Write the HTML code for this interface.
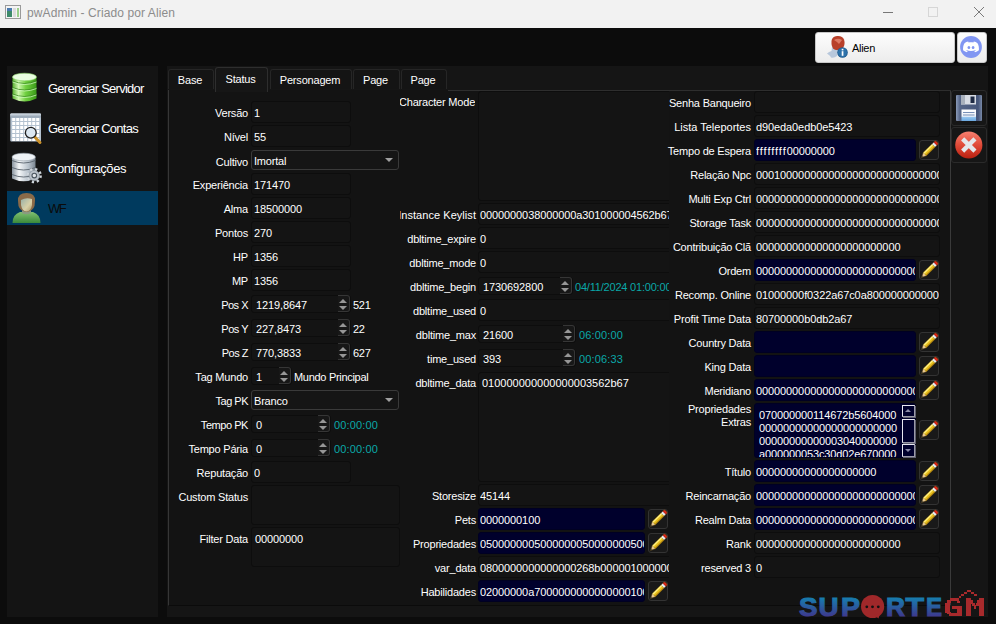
<!DOCTYPE html><html><head><meta charset="utf-8"><style>
*{margin:0;padding:0;box-sizing:border-box}
html,body{width:996px;height:624px;overflow:hidden;background:#0c0c0c;font-family:'Liberation Sans', sans-serif;font-size:11px}
.t{position:absolute;white-space:nowrap;line-height:13px}
.le{position:absolute;background:#141414;border:1px solid #0d0d0d;border-radius:3px}
.le.blue{background:#00002c;border-color:#000022}
.cb{position:absolute;background:#151515;border:1px solid #3a3a3a;border-radius:3px}
.cd{position:absolute;width:0;height:0;border-left:4px solid transparent;border-right:4px solid transparent;border-top:4px solid #a0a0a0}
.sb{position:absolute;background:#171717;border:1px solid #363636;border-left:none;border-radius:0 3px 3px 0}
.au{position:absolute;width:0;height:0;border-left:4px solid transparent;border-right:4px solid transparent;border-bottom:4px solid #969696}
.ad{position:absolute;width:0;height:0;border-left:4px solid transparent;border-right:4px solid transparent;border-top:4px solid #969696}
.pb{position:absolute;width:20px;height:20px;background:#191919;border:1px solid #333;border-radius:3px}
.pb svg{position:absolute;left:-1px;top:-1px;overflow:visible}
.abs{position:absolute}
</style></head><body>
<div class="abs" style="left:0;top:0;width:996px;height:28px;background:#f2f2f2"></div>
<svg class="abs" style="left:5px;top:5px" width="16" height="14" viewBox="0 0 16 14"><rect x="0.5" y="0.5" width="15" height="13" fill="#f4f4f4" stroke="#9a9a9a"/><rect x="2" y="3" width="5" height="9" fill="#3d8a6a"/><rect x="2" y="3" width="5" height="3" fill="#4a7ab0"/><rect x="8" y="3" width="3" height="9" fill="#dcdcdc"/><rect x="12" y="3" width="2" height="9" fill="#9ad08a"/></svg>
<div class="t" style="left:27px;top:7px;color:#8c8c8c;font-size:12px;letter-spacing:0.1px;">pwAdmin - Criado por Alien</div>
<div class="abs" style="left:883px;top:12px;width:10px;height:1px;background:#777"></div>
<div class="abs" style="left:928px;top:7px;width:10px;height:10px;border:1px solid #d6d6d6"></div>
<svg class="abs" style="left:973px;top:6px" width="12" height="12" viewBox="0 0 12 12"><path d="M1 1 L11 11 M11 1 L1 11" stroke="#7a7a7a" stroke-width="1"/></svg>
<div class="abs" style="left:815px;top:32px;width:140px;height:31px;background:linear-gradient(#fdfdfd,#ececec);border:1px solid #c8c8c8;border-radius:3px"></div>
<svg class="abs" style="left:826px;top:35px" width="24" height="24" viewBox="0 0 24 24"><path d="M1 18.5 Q3 16.5 5.5 16 L6 12 Q9 11 12 13 L11 21 Q8 23.5 5 22.5 Q4 20.5 1 18.5Z" fill="#b8c8dc"/><path d="M5.5 6 Q6 1.5 11 1 Q16.5 0.5 18 4.5 Q19.5 9 17 13 Q13 16 8.5 14.5 Q5 12.5 5.5 6Z" fill="#b8402a"/><path d="M8 5 Q12 2.5 16 5 L13 9 L11 7 Z" fill="#e0806a" opacity="0.9"/><circle cx="16.5" cy="17.5" r="5.3" fill="#1e5a8e"/><circle cx="16.5" cy="17.5" r="4.5" fill="#2e72aa"/><rect x="15.7" y="16.2" width="1.7" height="4.6" fill="#fff"/><rect x="15.7" y="13.8" width="1.7" height="1.6" fill="#fff"/></svg>
<div class="t" style="left:852px;top:42px;color:#000000;font-size:11px;letter-spacing:-0.3px;">Alien</div>
<div class="abs" style="left:957px;top:32px;width:30px;height:31px;background:linear-gradient(#fdfdfd,#ececec);border:1px solid #c8c8c8;border-radius:3px"></div>
<svg class="abs" style="left:960px;top:36px" width="22" height="22" viewBox="0 0 22 22"><circle cx="11" cy="11" r="10.9" fill="#8196f2"/><path d="M4.5 7.2 C5.6 6.3 6.9 5.8 8.2 5.6 L8.6 6.4 C10.2 6.1 11.8 6.1 13.4 6.4 L13.8 5.6 C15.1 5.8 16.4 6.3 17.5 7.2 C18.7 9.3 19.1 11.6 18.9 14.3 C17.6 15.3 16.3 15.9 15 16.3 L14.3 15.1 C14.9 14.9 15.4 14.6 15.9 14.3 L15.6 14 C12.6 15.4 9.4 15.4 6.4 14 L6.1 14.3 C6.6 14.6 7.1 14.9 7.7 15.1 L7 16.3 C5.7 15.9 4.4 15.3 3.1 14.3 C2.9 11.6 3.3 9.3 4.5 7.2Z" fill="#fff"/><ellipse cx="8.9" cy="11.4" rx="1.35" ry="1.5" fill="#8196f2"/><ellipse cx="13.1" cy="11.4" rx="1.35" ry="1.5" fill="#8196f2"/></svg>
<div class="abs" style="left:7px;top:66px;width:151px;height:551px;background:#141414"></div>
<div class="abs" style="left:7px;top:191px;width:151px;height:34px;background:#003a5e"></div>
<svg class="abs" style="left:12px;top:72px" width="25" height="32" viewBox="0 0 25 32"><defs><linearGradient id="g1" x1="0" x2="1"><stop offset="0" stop-color="#58b030"/><stop offset="0.25" stop-color="#d0f8b0"/><stop offset="0.55" stop-color="#70d040"/><stop offset="1" stop-color="#3a9a18"/></linearGradient></defs><path d="M0.5 5 Q12.5 -1 24.5 5 L24.5 26.5 Q12.5 32.5 0.5 26.5Z" fill="url(#g1)"/><ellipse cx="12.5" cy="5" rx="12" ry="3.8" fill="#e8fce0" stroke="#8ad068" stroke-width="0.6"/><path d="M0.5 9 Q12.5 14 24.5 9 M0.5 15.5 Q12.5 20.5 24.5 15.5 M0.5 22 Q12.5 27 24.5 22" stroke="#3a8a20" stroke-width="0.8" fill="none"/><path d="M0.5 10 Q12.5 15 24.5 10 M0.5 16.5 Q12.5 21.5 24.5 16.5 M0.5 23 Q12.5 28 24.5 23" stroke="#d8ffc8" stroke-width="0.7" fill="none"/></svg>
<svg class="abs" style="left:10px;top:113px" width="33" height="32" viewBox="0 0 33 32"><defs><linearGradient id="ch" x1="0" y1="0" x2="0" y2="1"><stop offset="0" stop-color="#d8e0e8"/><stop offset="1" stop-color="#8a9aaa"/></linearGradient></defs><rect x="0.3" y="0.5" width="30.7" height="28" rx="1" fill="#b4c2d0"/><rect x="0.3" y="0.5" width="30.7" height="4" rx="1" fill="url(#ch)"/><rect x="2.2" y="5" width="3" height="3" fill="#ffffff"/><rect x="6.2" y="5" width="3" height="3" fill="#ffffff"/><rect x="10.2" y="5" width="3" height="3" fill="#ffffff"/><rect x="14.2" y="5" width="3" height="3" fill="#ffffff"/><rect x="18.2" y="5" width="3" height="3" fill="#ffffff"/><rect x="22.2" y="5" width="3" height="3" fill="#ffffff"/><rect x="26.2" y="5" width="3" height="3" fill="#ffffff"/><rect x="2.2" y="9" width="3" height="3" fill="#ffffff"/><rect x="6.2" y="9" width="3" height="3" fill="#ffffff"/><rect x="10.2" y="9" width="3" height="3" fill="#ffffff"/><rect x="14.2" y="9" width="3" height="3" fill="#ffffff"/><rect x="18.2" y="9" width="3" height="3" fill="#ffffff"/><rect x="22.2" y="9" width="3" height="3" fill="#ffffff"/><rect x="26.2" y="9" width="3" height="3" fill="#ffffff"/><rect x="2.2" y="13" width="3" height="3" fill="#ffffff"/><rect x="6.2" y="13" width="3" height="3" fill="#ffffff"/><rect x="10.2" y="13" width="3" height="3" fill="#ffffff"/><rect x="14.2" y="13" width="3" height="3" fill="#ffffff"/><rect x="18.2" y="13" width="3" height="3" fill="#ffffff"/><rect x="22.2" y="13" width="3" height="3" fill="#ffffff"/><rect x="26.2" y="13" width="3" height="3" fill="#ffffff"/><rect x="2.2" y="17" width="3" height="3" fill="#ffffff"/><rect x="6.2" y="17" width="3" height="3" fill="#ffffff"/><rect x="10.2" y="17" width="3" height="3" fill="#ffffff"/><rect x="14.2" y="17" width="3" height="3" fill="#ffffff"/><rect x="18.2" y="17" width="3" height="3" fill="#ffffff"/><rect x="22.2" y="17" width="3" height="3" fill="#ffffff"/><rect x="26.2" y="17" width="3" height="3" fill="#ffffff"/><rect x="2.2" y="21" width="3" height="3" fill="#ffffff"/><rect x="6.2" y="21" width="3" height="3" fill="#ffffff"/><rect x="10.2" y="21" width="3" height="3" fill="#ffffff"/><rect x="14.2" y="21" width="3" height="3" fill="#ffffff"/><rect x="18.2" y="21" width="3" height="3" fill="#ffffff"/><rect x="22.2" y="21" width="3" height="3" fill="#ffffff"/><rect x="26.2" y="21" width="3" height="3" fill="#ffffff"/><rect x="2.2" y="25" width="3" height="3" fill="#ffffff"/><rect x="6.2" y="25" width="3" height="3" fill="#ffffff"/><rect x="10.2" y="25" width="3" height="3" fill="#ffffff"/><rect x="14.2" y="25" width="3" height="3" fill="#ffffff"/><rect x="18.2" y="25" width="3" height="3" fill="#ffffff"/><rect x="22.2" y="25" width="3" height="3" fill="#ffffff"/><rect x="26.2" y="25" width="3" height="3" fill="#ffffff"/><path d="M24.3 23.5 L30 29.5" stroke="#c8902a" stroke-width="3" stroke-linecap="round"/><circle cx="20.8" cy="19.7" r="5.4" fill="#dce8f2" stroke="#1e1e1e" stroke-width="1.3"/></svg>
<svg class="abs" style="left:11px;top:152px" width="32" height="32" viewBox="0 0 32 32"><defs><linearGradient id="g2" x1="0" x2="1"><stop offset="0" stop-color="#8a95a0"/><stop offset="0.3" stop-color="#f4f6f8"/><stop offset="0.7" stop-color="#b8c2cc"/><stop offset="1" stop-color="#7a8590"/></linearGradient></defs><path d="M1 5 Q12.5 -1 24.5 5 L24.5 26.5 Q12.5 32 1 26.5Z" fill="url(#g2)"/><ellipse cx="12.7" cy="5" rx="11.7" ry="3.8" fill="#eef2f6" stroke="#9aa4ae" stroke-width="0.6"/><path d="M1 8.5 Q12.5 13.5 24.5 8.5 M1 15.5 Q12.5 20.5 24.5 15.5 M1 22.5 Q12.5 27.5 24.5 22.5" stroke="#5a646e" stroke-width="0.9" fill="none"/><circle cx="23.3" cy="23.6" r="6.3" fill="none" stroke="#d0d6dc" stroke-width="2.6" stroke-dasharray="2.2 2.75"/><circle cx="23.3" cy="23.6" r="5.2" fill="#b8c0c8" stroke="#8a929a" stroke-width="0.6"/><circle cx="23.3" cy="23.6" r="2.3" fill="#dfe4e8" stroke="#4a545e" stroke-width="1.1"/></svg>
<svg class="abs" style="left:12px;top:192px" width="29" height="32" viewBox="0 0 29 32"><defs><linearGradient id="g3" x1="0" y1="0" x2="0" y2="1"><stop offset="0" stop-color="#80c070"/><stop offset="1" stop-color="#3a8a3a"/></linearGradient><linearGradient id="fc" x1="0" y1="0" x2="1" y2="1"><stop offset="0" stop-color="#98b0a8"/><stop offset="0.6" stop-color="#d8d0a8"/><stop offset="1" stop-color="#a89868"/></linearGradient></defs><path d="M0.5 31 Q0.5 22.5 8 20 L21 20 Q28.5 22.5 28.5 31Z" fill="url(#g3)"/><path d="M10 17 L10 21 Q14.5 23.5 19 21 L19 17Z" fill="#8a9a80"/><path d="M6 9 Q5.5 1 14.5 1 Q23.5 1 23 9 L22.5 14 Q21 19 14.5 20 Q8 19 6.5 14Z" fill="#8a6a48"/><path d="M9 8 Q14 5 20 7 L20 13 Q19 19 14.5 19.5 Q10 19 9 13Z" fill="url(#fc)"/></svg>
<div class="t" style="left:48px;top:82px;color:#ffffff;font-size:13px;letter-spacing:-0.75px;">Gerenciar Servidor</div>
<div class="t" style="left:48px;top:122px;color:#ffffff;font-size:13px;letter-spacing:-0.75px;">Gerenciar Contas</div>
<div class="t" style="left:48px;top:162px;color:#ffffff;font-size:13px;letter-spacing:-0.45px;">Configurações</div>
<div class="t" style="left:48px;top:202px;color:#0a0a0a;font-size:13px;letter-spacing:-1.6px;">WF</div>
<div class="abs" style="left:167px;top:66px;width:821px;height:551px;background:#151515"></div>
<div class="abs" style="left:168px;top:90px;width:783px;height:516px;background:#131313;border-left:1px solid #363636;border-right:1px solid #3a3a3a;border-bottom:1px solid #0b0b0b"></div>
<div class="abs" style="left:448px;top:90px;width:503px;height:1px;background:#2e2e2e"></div>
<div class="abs" style="left:168px;top:69px;width:46px;height:20px;background:#141414;border:1px solid #262626;border-bottom:none;border-radius:3px 3px 0 0"></div>
<div class="t" style="left:167px;top:74px;width:46px;text-align:center;color:#fff;letter-spacing:-0.2px">Base</div>
<div class="abs" style="left:215px;top:67px;width:53px;height:25px;background:#161616;border:1px solid #2e2e2e;border-bottom:none;border-radius:3px 3px 0 0"></div>
<div class="t" style="left:214px;top:73px;width:53px;text-align:center;color:#fff;letter-spacing:-0.2px">Status</div>
<div class="abs" style="left:270px;top:69px;width:82px;height:20px;background:#141414;border:1px solid #262626;border-bottom:none;border-radius:3px 3px 0 0"></div>
<div class="t" style="left:269px;top:74px;width:82px;text-align:center;color:#fff;letter-spacing:-0.2px">Personagem</div>
<div class="abs" style="left:353px;top:69px;width:47px;height:20px;background:#141414;border:1px solid #262626;border-bottom:none;border-radius:3px 3px 0 0"></div>
<div class="t" style="left:352px;top:74px;width:47px;text-align:center;color:#fff;letter-spacing:-0.2px">Page</div>
<div class="abs" style="left:401px;top:69px;width:46px;height:20px;background:#141414;border:1px solid #262626;border-bottom:none;border-radius:3px 3px 0 0"></div>
<div class="t" style="left:400px;top:74px;width:46px;text-align:center;color:#fff;letter-spacing:-0.2px">Page</div>
<div class="abs" style="left:951px;top:90px;width:36px;height:36px;background:#161616;border:1px solid #2a2a2a;border-radius:3px"></div>
<svg class="abs" style="left:955px;top:94px" width="28" height="28" viewBox="0 0 28 28"><defs><linearGradient id="sv" x1="0" x2="1"><stop offset="0" stop-color="#8a9ab8"/><stop offset="0.15" stop-color="#566688"/><stop offset="0.85" stop-color="#46567a"/><stop offset="1" stop-color="#7a8aa8"/></linearGradient><linearGradient id="sl" x1="0" y1="0" x2="0" y2="1"><stop offset="0" stop-color="#ffffff"/><stop offset="0.6" stop-color="#eef2f8"/><stop offset="0.64" stop-color="#9ac8f0"/><stop offset="1" stop-color="#6aa8e0"/></linearGradient></defs><rect x="1" y="1" width="26" height="26" rx="1" fill="url(#sv)"/><rect x="6" y="1" width="15" height="9.5" fill="#d8dce4"/><rect x="6" y="1" width="4" height="9.5" fill="#a8b0bc"/><rect x="15.5" y="2.5" width="4" height="6.5" fill="#1e2a44"/><rect x="6.5" y="15.5" width="14.5" height="11.5" fill="url(#sl)"/><rect x="8" y="18" width="11.5" height="1" fill="#7890b8"/><rect x="8" y="20.5" width="11.5" height="1" fill="#7890b8"/></svg>
<div class="abs" style="left:951px;top:127px;width:36px;height:36px;background:#161616;border:1px solid #2a2a2a;border-radius:3px"></div>
<svg class="abs" style="left:955px;top:131px" width="28" height="28" viewBox="0 0 28 28"><defs><linearGradient id="g4" x1="0" y1="0" x2="0" y2="1"><stop offset="0" stop-color="#f88070"/><stop offset="0.5" stop-color="#e04a38"/><stop offset="1" stop-color="#b82010"/></linearGradient></defs><circle cx="13.8" cy="14" r="13.6" fill="url(#g4)"/><path d="M9.2 9.4 L18.4 18.6 M18.4 9.4 L9.2 18.6" stroke="#e4e6ea" stroke-width="4.4" stroke-linecap="square"/></svg>
<div class="t" style="right:748px;top:107px;color:#ffffff;font-size:11px;letter-spacing:-0.2px;">Versão</div>
<div class="le" style="left:251px;top:101px;width:100px;height:22px"></div>
<div class="t" style="left:254px;top:107px;color:#ffffff;font-size:11px;letter-spacing:-0.1px;width:96px;overflow:hidden;">1</div>
<div class="t" style="right:748px;top:131px;color:#ffffff;font-size:11px;letter-spacing:-0.2px;">Nível</div>
<div class="le" style="left:251px;top:125px;width:100px;height:22px"></div>
<div class="t" style="left:254px;top:131px;color:#ffffff;font-size:11px;letter-spacing:-0.1px;width:96px;overflow:hidden;">55</div>
<div class="t" style="right:748px;top:156px;color:#ffffff;font-size:11px;letter-spacing:-0.2px;">Cultivo</div>
<div class="cb" style="left:251px;top:150px;width:148px;height:20px"></div>
<div class="t" style="left:254px;top:155px;color:#ffffff;font-size:11px;letter-spacing:-0.2px;">Imortal</div>
<div class="cd" style="left:385px;top:158px"></div>
<div class="t" style="right:748px;top:179px;color:#ffffff;font-size:11px;letter-spacing:-0.2px;">Experiência</div>
<div class="le" style="left:251px;top:173px;width:100px;height:22px"></div>
<div class="t" style="left:254px;top:179px;color:#ffffff;font-size:11px;letter-spacing:-0.1px;width:96px;overflow:hidden;">171470</div>
<div class="t" style="right:748px;top:203px;color:#ffffff;font-size:11px;letter-spacing:-0.2px;">Alma</div>
<div class="le" style="left:251px;top:197px;width:100px;height:22px"></div>
<div class="t" style="left:254px;top:203px;color:#ffffff;font-size:11px;letter-spacing:-0.1px;width:96px;overflow:hidden;">18500000</div>
<div class="t" style="right:748px;top:227px;color:#ffffff;font-size:11px;letter-spacing:-0.2px;">Pontos</div>
<div class="le" style="left:251px;top:221px;width:100px;height:22px"></div>
<div class="t" style="left:254px;top:227px;color:#ffffff;font-size:11px;letter-spacing:-0.1px;width:96px;overflow:hidden;">270</div>
<div class="t" style="right:748px;top:251px;color:#ffffff;font-size:11px;letter-spacing:-0.2px;">HP</div>
<div class="le" style="left:251px;top:245px;width:100px;height:22px"></div>
<div class="t" style="left:254px;top:251px;color:#ffffff;font-size:11px;letter-spacing:-0.1px;width:96px;overflow:hidden;">1356</div>
<div class="t" style="right:748px;top:275px;color:#ffffff;font-size:11px;letter-spacing:-0.2px;">MP</div>
<div class="le" style="left:251px;top:269px;width:100px;height:22px"></div>
<div class="t" style="left:254px;top:275px;color:#ffffff;font-size:11px;letter-spacing:-0.1px;width:96px;overflow:hidden;">1356</div>
<div class="t" style="right:748px;top:299px;color:#ffffff;font-size:11px;letter-spacing:-0.5px;">Pos X</div>
<div class="le" style="left:251px;top:295px;width:100px;height:18px"></div>
<div class="sb" style="left:338px;top:295px;width:12px;height:17px"></div>
<div class="au" style="left:339px;top:299px"></div>
<div class="ad" style="left:339px;top:306px"></div>
<div class="t" style="left:256px;top:299px;color:#ffffff;font-size:11px;letter-spacing:-0.1px;">1219,8647</div>
<div class="t" style="left:353px;top:299px;color:#ffffff;font-size:11px;letter-spacing:-0.3px;">521</div>
<div class="t" style="right:748px;top:323px;color:#ffffff;font-size:11px;letter-spacing:-0.5px;">Pos Y</div>
<div class="le" style="left:251px;top:319px;width:100px;height:18px"></div>
<div class="sb" style="left:338px;top:319px;width:12px;height:17px"></div>
<div class="au" style="left:339px;top:323px"></div>
<div class="ad" style="left:339px;top:330px"></div>
<div class="t" style="left:256px;top:323px;color:#ffffff;font-size:11px;letter-spacing:-0.1px;">227,8473</div>
<div class="t" style="left:353px;top:323px;color:#ffffff;font-size:11px;letter-spacing:-0.3px;">22</div>
<div class="t" style="right:748px;top:347px;color:#ffffff;font-size:11px;letter-spacing:-0.5px;">Pos Z</div>
<div class="le" style="left:251px;top:343px;width:100px;height:18px"></div>
<div class="sb" style="left:338px;top:343px;width:12px;height:17px"></div>
<div class="au" style="left:339px;top:347px"></div>
<div class="ad" style="left:339px;top:354px"></div>
<div class="t" style="left:256px;top:347px;color:#ffffff;font-size:11px;letter-spacing:-0.1px;">770,3833</div>
<div class="t" style="left:353px;top:347px;color:#ffffff;font-size:11px;letter-spacing:-0.3px;">627</div>
<div class="t" style="right:748px;top:371px;color:#ffffff;font-size:11px;letter-spacing:-0.2px;">Tag Mundo</div>
<div class="le" style="left:251px;top:367px;width:41px;height:18px"></div>
<div class="sb" style="left:279px;top:367px;width:12px;height:17px"></div>
<div class="au" style="left:280px;top:371px"></div>
<div class="ad" style="left:280px;top:378px"></div>
<div class="t" style="left:256px;top:371px;color:#ffffff;font-size:11px;letter-spacing:-0.1px;">1</div>
<div class="t" style="left:294px;top:371px;color:#ffffff;font-size:11px;letter-spacing:-0.3px;">Mundo Principal</div>
<div class="t" style="right:748px;top:395px;color:#ffffff;font-size:11px;letter-spacing:-0.5px;">Tag PK</div>
<div class="cb" style="left:251px;top:390px;width:148px;height:20px"></div>
<div class="t" style="left:254px;top:395px;color:#ffffff;font-size:11px;letter-spacing:-0.2px;">Branco</div>
<div class="cd" style="left:385px;top:398px"></div>
<div class="t" style="right:748px;top:419px;color:#ffffff;font-size:11px;letter-spacing:-0.45px;">Tempo PK</div>
<div class="le" style="left:251px;top:415px;width:80px;height:18px"></div>
<div class="sb" style="left:318px;top:415px;width:12px;height:17px"></div>
<div class="au" style="left:319px;top:419px"></div>
<div class="ad" style="left:319px;top:426px"></div>
<div class="t" style="left:256px;top:419px;color:#ffffff;font-size:11px;letter-spacing:-0.1px;">0</div>
<div class="t" style="left:334px;top:419px;color:#0aa8a8;font-size:11px;letter-spacing:0.15px;">00:00:00</div>
<div class="t" style="right:748px;top:443px;color:#ffffff;font-size:11px;letter-spacing:-0.2px;">Tempo Pária</div>
<div class="le" style="left:251px;top:439px;width:80px;height:18px"></div>
<div class="sb" style="left:318px;top:439px;width:12px;height:17px"></div>
<div class="au" style="left:319px;top:443px"></div>
<div class="ad" style="left:319px;top:450px"></div>
<div class="t" style="left:256px;top:443px;color:#ffffff;font-size:11px;letter-spacing:-0.1px;">0</div>
<div class="t" style="left:334px;top:443px;color:#0aa8a8;font-size:11px;letter-spacing:0.15px;">00:00:00</div>
<div class="t" style="right:748px;top:467px;color:#ffffff;font-size:11px;letter-spacing:-0.2px;">Reputação</div>
<div class="le" style="left:251px;top:461px;width:100px;height:22px"></div>
<div class="t" style="left:254px;top:467px;color:#ffffff;font-size:11px;letter-spacing:-0.1px;width:96px;overflow:hidden;">0</div>
<div class="t" style="right:748px;top:491px;color:#ffffff;font-size:11px;letter-spacing:-0.2px;">Custom Status</div>
<div class="le" style="left:251px;top:485px;width:149px;height:40px"></div>
<div class="t" style="right:748px;top:533px;color:#ffffff;font-size:11px;letter-spacing:-0.2px;">Filter Data</div>
<div class="le" style="left:251px;top:527px;width:149px;height:40px"></div>
<div class="t" style="left:255px;top:533px;color:#ffffff;font-size:11px;letter-spacing:-0.1px;">00000000</div>
<div class="abs" style="left:0;top:-1px;width:996px;height:624px">
<div class="abs" style="left:400px;top:0;width:269px;height:624px;overflow:hidden"><div class="abs" style="left:-400px;top:0;width:996px;height:624px">
<div class="t" style="left:399px;top:97px;color:#ffffff;font-size:11px;letter-spacing:-0.2px;clip-path:inset(0 0 0 0)">Character Mode</div>
<div class="le" style="left:478px;top:92px;width:200px;height:110px"></div>
<div class="t" style="right:520px;top:210px;color:#ffffff;font-size:11px;letter-spacing:0.05px;">Instance Keylist</div>
<div class="le" style="left:478px;top:204px;width:200px;height:22px"></div>
<div class="t" style="left:480px;top:210px;color:#ffffff;font-size:11px;letter-spacing:-0.1px;width:197px;overflow:hidden;">0000000038000000a301000004562b67</div>
<div class="t" style="right:520px;top:234px;color:#ffffff;font-size:11px;letter-spacing:-0.2px;">dbltime_expire</div>
<div class="le" style="left:478px;top:228px;width:200px;height:22px"></div>
<div class="t" style="left:480px;top:234px;color:#ffffff;font-size:11px;letter-spacing:-0.1px;width:197px;overflow:hidden;">0</div>
<div class="t" style="right:520px;top:258px;color:#ffffff;font-size:11px;letter-spacing:-0.2px;">dbltime_mode</div>
<div class="le" style="left:478px;top:252px;width:200px;height:22px"></div>
<div class="t" style="left:480px;top:258px;color:#ffffff;font-size:11px;letter-spacing:-0.1px;width:197px;overflow:hidden;">0</div>
<div class="t" style="right:520px;top:282px;color:#ffffff;font-size:11px;letter-spacing:-0.2px;">dbltime_begin</div>
<div class="le" style="left:478px;top:278px;width:95px;height:18px"></div>
<div class="sb" style="left:560px;top:278px;width:12px;height:17px"></div>
<div class="au" style="left:561px;top:282px"></div>
<div class="ad" style="left:561px;top:289px"></div>
<div class="t" style="left:483px;top:282px;color:#ffffff;font-size:11px;letter-spacing:-0.1px;">1730692800</div>
<div class="t" style="left:575px;top:282px;color:#0aa8a8;font-size:11px;letter-spacing:-0.2px;">04/11/2024 01:00:00</div>
<div class="t" style="right:520px;top:306px;color:#ffffff;font-size:11px;letter-spacing:-0.2px;">dbltime_used</div>
<div class="le" style="left:478px;top:300px;width:200px;height:22px"></div>
<div class="t" style="left:480px;top:306px;color:#ffffff;font-size:11px;letter-spacing:-0.1px;width:197px;overflow:hidden;">0</div>
<div class="t" style="right:520px;top:330px;color:#ffffff;font-size:11px;letter-spacing:-0.2px;">dbltime_max</div>
<div class="le" style="left:478px;top:326px;width:98px;height:18px"></div>
<div class="sb" style="left:563px;top:326px;width:12px;height:17px"></div>
<div class="au" style="left:564px;top:330px"></div>
<div class="ad" style="left:564px;top:337px"></div>
<div class="t" style="left:483px;top:330px;color:#ffffff;font-size:11px;letter-spacing:-0.1px;">21600</div>
<div class="t" style="left:579px;top:330px;color:#0aa8a8;font-size:11px;letter-spacing:0.15px;">06:00:00</div>
<div class="t" style="right:520px;top:354px;color:#ffffff;font-size:11px;letter-spacing:-0.2px;">time_used</div>
<div class="le" style="left:478px;top:350px;width:98px;height:18px"></div>
<div class="sb" style="left:563px;top:350px;width:12px;height:17px"></div>
<div class="au" style="left:564px;top:354px"></div>
<div class="ad" style="left:564px;top:361px"></div>
<div class="t" style="left:483px;top:354px;color:#ffffff;font-size:11px;letter-spacing:-0.1px;">393</div>
<div class="t" style="left:579px;top:354px;color:#0aa8a8;font-size:11px;letter-spacing:0.15px;">00:06:33</div>
<div class="t" style="right:520px;top:378px;color:#ffffff;font-size:11px;letter-spacing:-0.2px;">dbltime_data</div>
<div class="le" style="left:478px;top:373px;width:200px;height:110px"></div>
<div class="t" style="left:482px;top:378px;color:#ffffff;font-size:11px;">010000000000000003562b67</div>
<div class="t" style="right:520px;top:491px;color:#ffffff;font-size:11px;letter-spacing:-0.2px;">Storesize</div>
<div class="le" style="left:478px;top:485px;width:200px;height:22px"></div>
<div class="t" style="left:480px;top:491px;color:#ffffff;font-size:11px;letter-spacing:-0.1px;width:197px;overflow:hidden;">45144</div>
<div class="t" style="right:520px;top:515px;color:#ffffff;font-size:11px;letter-spacing:-0.2px;">Pets</div>
<div class="le blue" style="left:478px;top:509px;width:167px;height:22px"></div>
<div class="t" style="left:480px;top:515px;color:#ffffff;font-size:11px;letter-spacing:-0.1px;width:164px;overflow:hidden;">0000000100</div>
<div class="pb" style="left:648px;top:510px"><svg width="20" height="20" viewBox="0 0 20 20"><polygon points="2.83,17.18 7.39,15.81 4.22,12.62" fill="#e8c890"/><polygon points="2.40,17.60 4.31,16.97 3.04,15.69" fill="#404850"/><polygon points="7.39,15.81 16.19,7.08 13.02,3.88 4.22,12.62" fill="#e8c020"/><polygon points="5.38,13.79 14.18,5.05 13.02,3.88 4.22,12.62" fill="#fff080"/><polygon points="7.39,15.81 16.19,7.08 15.45,6.33 6.65,15.07" fill="#b88a10"/><polygon points="16.19,7.08 17.89,5.38 14.72,2.19 13.02,3.88" fill="#e8eaee"/><polygon points="17.89,5.38 19.31,3.97 18.22,1.88 16.14,0.78 14.72,2.19" fill="#d8281a"/><polygon points="2.40,17.60 7.39,15.81 19.31,3.97 18.22,1.88 16.14,0.78 4.22,12.62" fill="none" stroke="#5a4210" stroke-width="0.5"/></svg></div>
<div class="t" style="right:520px;top:539px;color:#ffffff;font-size:11px;letter-spacing:-0.2px;">Propriedades</div>
<div class="le blue" style="left:478px;top:533px;width:167px;height:22px"></div>
<div class="t" style="left:480px;top:539px;color:#ffffff;font-size:11px;letter-spacing:-0.1px;width:164px;overflow:hidden;">0500000005000000050000000500000005</div>
<div class="pb" style="left:648px;top:534px"><svg width="20" height="20" viewBox="0 0 20 20"><polygon points="2.83,17.18 7.39,15.81 4.22,12.62" fill="#e8c890"/><polygon points="2.40,17.60 4.31,16.97 3.04,15.69" fill="#404850"/><polygon points="7.39,15.81 16.19,7.08 13.02,3.88 4.22,12.62" fill="#e8c020"/><polygon points="5.38,13.79 14.18,5.05 13.02,3.88 4.22,12.62" fill="#fff080"/><polygon points="7.39,15.81 16.19,7.08 15.45,6.33 6.65,15.07" fill="#b88a10"/><polygon points="16.19,7.08 17.89,5.38 14.72,2.19 13.02,3.88" fill="#e8eaee"/><polygon points="17.89,5.38 19.31,3.97 18.22,1.88 16.14,0.78 14.72,2.19" fill="#d8281a"/><polygon points="2.40,17.60 7.39,15.81 19.31,3.97 18.22,1.88 16.14,0.78 4.22,12.62" fill="none" stroke="#5a4210" stroke-width="0.5"/></svg></div>
<div class="t" style="right:520px;top:563px;color:#ffffff;font-size:11px;letter-spacing:-0.2px;">var_data</div>
<div class="le" style="left:478px;top:557px;width:200px;height:22px"></div>
<div class="t" style="left:480px;top:563px;color:#ffffff;font-size:11px;letter-spacing:-0.1px;width:197px;overflow:hidden;">0800000000000000268b000001000000</div>
<div class="t" style="right:520px;top:587px;color:#ffffff;font-size:11px;letter-spacing:-0.2px;">Habilidades</div>
<div class="le blue" style="left:478px;top:581px;width:167px;height:22px"></div>
<div class="t" style="left:480px;top:587px;color:#ffffff;font-size:11px;letter-spacing:-0.1px;width:164px;overflow:hidden;">02000000a7000000000000000100000</div>
<div class="pb" style="left:648px;top:582px"><svg width="20" height="20" viewBox="0 0 20 20"><polygon points="2.83,17.18 7.39,15.81 4.22,12.62" fill="#e8c890"/><polygon points="2.40,17.60 4.31,16.97 3.04,15.69" fill="#404850"/><polygon points="7.39,15.81 16.19,7.08 13.02,3.88 4.22,12.62" fill="#e8c020"/><polygon points="5.38,13.79 14.18,5.05 13.02,3.88 4.22,12.62" fill="#fff080"/><polygon points="7.39,15.81 16.19,7.08 15.45,6.33 6.65,15.07" fill="#b88a10"/><polygon points="16.19,7.08 17.89,5.38 14.72,2.19 13.02,3.88" fill="#e8eaee"/><polygon points="17.89,5.38 19.31,3.97 18.22,1.88 16.14,0.78 14.72,2.19" fill="#d8281a"/><polygon points="2.40,17.60 7.39,15.81 19.31,3.97 18.22,1.88 16.14,0.78 4.22,12.62" fill="none" stroke="#5a4210" stroke-width="0.5"/></svg></div>
</div></div>
<div class="t" style="right:245px;top:98px;color:#ffffff;font-size:11px;letter-spacing:-0.2px;">Senha Banqueiro</div>
<div class="le" style="left:754px;top:92px;width:186px;height:22px"></div>
<div class="t" style="right:245px;top:122px;color:#ffffff;font-size:11px;letter-spacing:0px;">Lista Teleportes</div>
<div class="le" style="left:754px;top:116px;width:186px;height:22px"></div>
<div class="t" style="left:756px;top:122px;color:#ffffff;font-size:11px;letter-spacing:-0.1px;width:183px;overflow:hidden;">d90eda0edb0e5423</div>
<div class="t" style="right:245px;top:146px;color:#ffffff;font-size:11px;letter-spacing:-0.2px;">Tempo de Espera</div>
<div class="le blue" style="left:754px;top:140px;width:162px;height:22px"></div>
<div class="t" style="left:756px;top:146px;color:#ffffff;font-size:11px;letter-spacing:-0.1px;width:159px;overflow:hidden;"><span style="letter-spacing:0.95px">ffffffff</span>00000000</div>
<div class="pb" style="left:919px;top:141px"><svg width="20" height="20" viewBox="0 0 20 20"><polygon points="2.83,17.18 7.39,15.81 4.22,12.62" fill="#e8c890"/><polygon points="2.40,17.60 4.31,16.97 3.04,15.69" fill="#404850"/><polygon points="7.39,15.81 16.19,7.08 13.02,3.88 4.22,12.62" fill="#e8c020"/><polygon points="5.38,13.79 14.18,5.05 13.02,3.88 4.22,12.62" fill="#fff080"/><polygon points="7.39,15.81 16.19,7.08 15.45,6.33 6.65,15.07" fill="#b88a10"/><polygon points="16.19,7.08 17.89,5.38 14.72,2.19 13.02,3.88" fill="#e8eaee"/><polygon points="17.89,5.38 19.31,3.97 18.22,1.88 16.14,0.78 14.72,2.19" fill="#d8281a"/><polygon points="2.40,17.60 7.39,15.81 19.31,3.97 18.22,1.88 16.14,0.78 4.22,12.62" fill="none" stroke="#5a4210" stroke-width="0.5"/></svg></div>
<div class="t" style="right:245px;top:170px;color:#ffffff;font-size:11px;letter-spacing:-0.2px;">Relação Npc</div>
<div class="le" style="left:754px;top:164px;width:186px;height:22px"></div>
<div class="t" style="left:756px;top:170px;color:#ffffff;font-size:11px;letter-spacing:-0.1px;width:183px;overflow:hidden;">000100000000000000000000000000000000</div>
<div class="t" style="right:245px;top:194px;color:#ffffff;font-size:11px;letter-spacing:-0.2px;">Multi Exp Ctrl</div>
<div class="le" style="left:754px;top:188px;width:186px;height:22px"></div>
<div class="t" style="left:756px;top:194px;color:#ffffff;font-size:11px;letter-spacing:-0.1px;width:183px;overflow:hidden;">0000000000000000000000000000000000000000</div>
<div class="t" style="right:245px;top:218px;color:#ffffff;font-size:11px;letter-spacing:-0.2px;">Storage Task</div>
<div class="le" style="left:754px;top:212px;width:186px;height:22px"></div>
<div class="t" style="left:756px;top:218px;color:#ffffff;font-size:11px;letter-spacing:-0.1px;width:183px;overflow:hidden;">0000000000000000000000000000000000000000</div>
<div class="t" style="right:245px;top:242px;color:#ffffff;font-size:11px;letter-spacing:-0.2px;">Contribuição Clã</div>
<div class="le" style="left:754px;top:236px;width:186px;height:22px"></div>
<div class="t" style="left:756px;top:242px;color:#ffffff;font-size:11px;letter-spacing:-0.1px;width:183px;overflow:hidden;">000000000000000000000000</div>
<div class="t" style="right:245px;top:266px;color:#ffffff;font-size:11px;letter-spacing:-0.2px;">Ordem</div>
<div class="le blue" style="left:754px;top:260px;width:162px;height:22px"></div>
<div class="t" style="left:756px;top:266px;color:#ffffff;font-size:11px;letter-spacing:-0.1px;width:159px;overflow:hidden;">0000000000000000000000000000000000000000</div>
<div class="pb" style="left:919px;top:261px"><svg width="20" height="20" viewBox="0 0 20 20"><polygon points="2.83,17.18 7.39,15.81 4.22,12.62" fill="#e8c890"/><polygon points="2.40,17.60 4.31,16.97 3.04,15.69" fill="#404850"/><polygon points="7.39,15.81 16.19,7.08 13.02,3.88 4.22,12.62" fill="#e8c020"/><polygon points="5.38,13.79 14.18,5.05 13.02,3.88 4.22,12.62" fill="#fff080"/><polygon points="7.39,15.81 16.19,7.08 15.45,6.33 6.65,15.07" fill="#b88a10"/><polygon points="16.19,7.08 17.89,5.38 14.72,2.19 13.02,3.88" fill="#e8eaee"/><polygon points="17.89,5.38 19.31,3.97 18.22,1.88 16.14,0.78 14.72,2.19" fill="#d8281a"/><polygon points="2.40,17.60 7.39,15.81 19.31,3.97 18.22,1.88 16.14,0.78 4.22,12.62" fill="none" stroke="#5a4210" stroke-width="0.5"/></svg></div>
<div class="t" style="right:245px;top:290px;color:#ffffff;font-size:11px;letter-spacing:-0.2px;">Recomp. Online</div>
<div class="le" style="left:754px;top:284px;width:186px;height:22px"></div>
<div class="t" style="left:756px;top:290px;color:#ffffff;font-size:11px;letter-spacing:-0.1px;width:183px;overflow:hidden;">01000000f0322a67c0a800000000000000</div>
<div class="t" style="right:245px;top:314px;color:#ffffff;font-size:11px;letter-spacing:-0.1px;">Profit Time Data</div>
<div class="le" style="left:754px;top:308px;width:186px;height:22px"></div>
<div class="t" style="left:756px;top:314px;color:#ffffff;font-size:11px;letter-spacing:-0.1px;width:183px;overflow:hidden;">80700000b0db2a67</div>
<div class="t" style="right:245px;top:338px;color:#ffffff;font-size:11px;letter-spacing:-0.2px;">Country Data</div>
<div class="le blue" style="left:754px;top:332px;width:162px;height:22px"></div>
<div class="pb" style="left:919px;top:333px"><svg width="20" height="20" viewBox="0 0 20 20"><polygon points="2.83,17.18 7.39,15.81 4.22,12.62" fill="#e8c890"/><polygon points="2.40,17.60 4.31,16.97 3.04,15.69" fill="#404850"/><polygon points="7.39,15.81 16.19,7.08 13.02,3.88 4.22,12.62" fill="#e8c020"/><polygon points="5.38,13.79 14.18,5.05 13.02,3.88 4.22,12.62" fill="#fff080"/><polygon points="7.39,15.81 16.19,7.08 15.45,6.33 6.65,15.07" fill="#b88a10"/><polygon points="16.19,7.08 17.89,5.38 14.72,2.19 13.02,3.88" fill="#e8eaee"/><polygon points="17.89,5.38 19.31,3.97 18.22,1.88 16.14,0.78 14.72,2.19" fill="#d8281a"/><polygon points="2.40,17.60 7.39,15.81 19.31,3.97 18.22,1.88 16.14,0.78 4.22,12.62" fill="none" stroke="#5a4210" stroke-width="0.5"/></svg></div>
<div class="t" style="right:245px;top:362px;color:#ffffff;font-size:11px;letter-spacing:-0.2px;">King Data</div>
<div class="le blue" style="left:754px;top:356px;width:162px;height:22px"></div>
<div class="pb" style="left:919px;top:357px"><svg width="20" height="20" viewBox="0 0 20 20"><polygon points="2.83,17.18 7.39,15.81 4.22,12.62" fill="#e8c890"/><polygon points="2.40,17.60 4.31,16.97 3.04,15.69" fill="#404850"/><polygon points="7.39,15.81 16.19,7.08 13.02,3.88 4.22,12.62" fill="#e8c020"/><polygon points="5.38,13.79 14.18,5.05 13.02,3.88 4.22,12.62" fill="#fff080"/><polygon points="7.39,15.81 16.19,7.08 15.45,6.33 6.65,15.07" fill="#b88a10"/><polygon points="16.19,7.08 17.89,5.38 14.72,2.19 13.02,3.88" fill="#e8eaee"/><polygon points="17.89,5.38 19.31,3.97 18.22,1.88 16.14,0.78 14.72,2.19" fill="#d8281a"/><polygon points="2.40,17.60 7.39,15.81 19.31,3.97 18.22,1.88 16.14,0.78 4.22,12.62" fill="none" stroke="#5a4210" stroke-width="0.5"/></svg></div>
<div class="t" style="right:245px;top:386px;color:#ffffff;font-size:11px;letter-spacing:-0.2px;">Meridiano</div>
<div class="le blue" style="left:754px;top:380px;width:162px;height:22px"></div>
<div class="t" style="left:756px;top:386px;color:#ffffff;font-size:11px;letter-spacing:-0.1px;width:159px;overflow:hidden;">0000000000000000000000000000000000000000</div>
<div class="pb" style="left:919px;top:381px"><svg width="20" height="20" viewBox="0 0 20 20"><polygon points="2.83,17.18 7.39,15.81 4.22,12.62" fill="#e8c890"/><polygon points="2.40,17.60 4.31,16.97 3.04,15.69" fill="#404850"/><polygon points="7.39,15.81 16.19,7.08 13.02,3.88 4.22,12.62" fill="#e8c020"/><polygon points="5.38,13.79 14.18,5.05 13.02,3.88 4.22,12.62" fill="#fff080"/><polygon points="7.39,15.81 16.19,7.08 15.45,6.33 6.65,15.07" fill="#b88a10"/><polygon points="16.19,7.08 17.89,5.38 14.72,2.19 13.02,3.88" fill="#e8eaee"/><polygon points="17.89,5.38 19.31,3.97 18.22,1.88 16.14,0.78 14.72,2.19" fill="#d8281a"/><polygon points="2.40,17.60 7.39,15.81 19.31,3.97 18.22,1.88 16.14,0.78 4.22,12.62" fill="none" stroke="#5a4210" stroke-width="0.5"/></svg></div>
<div class="t" style="right:245px;top:404px;color:#ffffff;font-size:11px;letter-spacing:-0.2px;">Propriedades</div>
<div class="t" style="right:245px;top:417px;color:#ffffff;font-size:11px;letter-spacing:-0.2px;">Extras</div>
<div class="le blue" style="left:754px;top:404px;width:162px;height:55px"></div>
<div class="t" style="left:759px;top:410px;color:#ffffff;font-size:11px;letter-spacing:-0.12px;width:142px;overflow:hidden;height:13px;">070000000114672b5604000</div>
<div class="t" style="left:759px;top:423px;color:#ffffff;font-size:11px;letter-spacing:-0.12px;width:142px;overflow:hidden;height:13px;">00000000000000000000000</div>
<div class="t" style="left:759px;top:436px;color:#ffffff;font-size:11px;letter-spacing:-0.12px;width:142px;overflow:hidden;height:13px;">00000000000003040000000</div>
<div class="t" style="left:759px;top:449px;color:#ffffff;font-size:11px;letter-spacing:-0.12px;width:142px;overflow:hidden;height:9px;">a000000053c30d02e670000</div>
<div style="position:absolute;width:13px;background:#00002c;border-top:1px solid #e8e8f0;border-left:1px solid #e8e8f0;border-right:1px solid #9a9aa8;border-bottom:1px solid #9a9aa8;box-shadow:1px 1px 0 #606070;left:902px;top:406px;height:12px"></div>
<div class="au" style="left:905px;top:410px;border-bottom-color:#8a8aa8;border-left-width:3.5px;border-right-width:3.5px;border-bottom-width:3px"></div>
<div style="position:absolute;width:13px;background:#00002c;border-top:1px solid #e8e8f0;border-left:1px solid #e8e8f0;border-right:1px solid #9a9aa8;border-bottom:1px solid #9a9aa8;box-shadow:1px 1px 0 #606070;left:902px;top:420px;height:24px"></div>
<div style="position:absolute;width:13px;background:#00002c;border-top:1px solid #e8e8f0;border-left:1px solid #e8e8f0;border-right:1px solid #9a9aa8;border-bottom:1px solid #9a9aa8;box-shadow:1px 1px 0 #606070;left:902px;top:445px;height:13px"></div>
<div class="ad" style="left:905px;top:450px;border-top-color:#8a8aa8;border-left-width:3.5px;border-right-width:3.5px;border-top-width:3px"></div>
<div class="pb" style="left:919px;top:421px"><svg width="20" height="20" viewBox="0 0 20 20"><polygon points="2.83,17.18 7.39,15.81 4.22,12.62" fill="#e8c890"/><polygon points="2.40,17.60 4.31,16.97 3.04,15.69" fill="#404850"/><polygon points="7.39,15.81 16.19,7.08 13.02,3.88 4.22,12.62" fill="#e8c020"/><polygon points="5.38,13.79 14.18,5.05 13.02,3.88 4.22,12.62" fill="#fff080"/><polygon points="7.39,15.81 16.19,7.08 15.45,6.33 6.65,15.07" fill="#b88a10"/><polygon points="16.19,7.08 17.89,5.38 14.72,2.19 13.02,3.88" fill="#e8eaee"/><polygon points="17.89,5.38 19.31,3.97 18.22,1.88 16.14,0.78 14.72,2.19" fill="#d8281a"/><polygon points="2.40,17.60 7.39,15.81 19.31,3.97 18.22,1.88 16.14,0.78 4.22,12.62" fill="none" stroke="#5a4210" stroke-width="0.5"/></svg></div>
<div class="t" style="right:245px;top:467px;color:#ffffff;font-size:11px;letter-spacing:-0.2px;">Título</div>
<div class="le blue" style="left:754px;top:461px;width:162px;height:22px"></div>
<div class="t" style="left:756px;top:467px;color:#ffffff;font-size:11px;letter-spacing:-0.1px;width:159px;overflow:hidden;">00000000000000000000</div>
<div class="pb" style="left:919px;top:462px"><svg width="20" height="20" viewBox="0 0 20 20"><polygon points="2.83,17.18 7.39,15.81 4.22,12.62" fill="#e8c890"/><polygon points="2.40,17.60 4.31,16.97 3.04,15.69" fill="#404850"/><polygon points="7.39,15.81 16.19,7.08 13.02,3.88 4.22,12.62" fill="#e8c020"/><polygon points="5.38,13.79 14.18,5.05 13.02,3.88 4.22,12.62" fill="#fff080"/><polygon points="7.39,15.81 16.19,7.08 15.45,6.33 6.65,15.07" fill="#b88a10"/><polygon points="16.19,7.08 17.89,5.38 14.72,2.19 13.02,3.88" fill="#e8eaee"/><polygon points="17.89,5.38 19.31,3.97 18.22,1.88 16.14,0.78 14.72,2.19" fill="#d8281a"/><polygon points="2.40,17.60 7.39,15.81 19.31,3.97 18.22,1.88 16.14,0.78 4.22,12.62" fill="none" stroke="#5a4210" stroke-width="0.5"/></svg></div>
<div class="t" style="right:245px;top:491px;color:#ffffff;font-size:11px;letter-spacing:-0.2px;">Reincarnação</div>
<div class="le blue" style="left:754px;top:485px;width:162px;height:22px"></div>
<div class="t" style="left:756px;top:491px;color:#ffffff;font-size:11px;letter-spacing:-0.1px;width:159px;overflow:hidden;">0000000000000000000000000000000000000000</div>
<div class="pb" style="left:919px;top:486px"><svg width="20" height="20" viewBox="0 0 20 20"><polygon points="2.83,17.18 7.39,15.81 4.22,12.62" fill="#e8c890"/><polygon points="2.40,17.60 4.31,16.97 3.04,15.69" fill="#404850"/><polygon points="7.39,15.81 16.19,7.08 13.02,3.88 4.22,12.62" fill="#e8c020"/><polygon points="5.38,13.79 14.18,5.05 13.02,3.88 4.22,12.62" fill="#fff080"/><polygon points="7.39,15.81 16.19,7.08 15.45,6.33 6.65,15.07" fill="#b88a10"/><polygon points="16.19,7.08 17.89,5.38 14.72,2.19 13.02,3.88" fill="#e8eaee"/><polygon points="17.89,5.38 19.31,3.97 18.22,1.88 16.14,0.78 14.72,2.19" fill="#d8281a"/><polygon points="2.40,17.60 7.39,15.81 19.31,3.97 18.22,1.88 16.14,0.78 4.22,12.62" fill="none" stroke="#5a4210" stroke-width="0.5"/></svg></div>
<div class="t" style="right:245px;top:515px;color:#ffffff;font-size:11px;letter-spacing:-0.2px;">Realm Data</div>
<div class="le blue" style="left:754px;top:509px;width:162px;height:22px"></div>
<div class="t" style="left:756px;top:515px;color:#ffffff;font-size:11px;letter-spacing:-0.1px;width:159px;overflow:hidden;">0000000000000000000000000000000000000000</div>
<div class="pb" style="left:919px;top:510px"><svg width="20" height="20" viewBox="0 0 20 20"><polygon points="2.83,17.18 7.39,15.81 4.22,12.62" fill="#e8c890"/><polygon points="2.40,17.60 4.31,16.97 3.04,15.69" fill="#404850"/><polygon points="7.39,15.81 16.19,7.08 13.02,3.88 4.22,12.62" fill="#e8c020"/><polygon points="5.38,13.79 14.18,5.05 13.02,3.88 4.22,12.62" fill="#fff080"/><polygon points="7.39,15.81 16.19,7.08 15.45,6.33 6.65,15.07" fill="#b88a10"/><polygon points="16.19,7.08 17.89,5.38 14.72,2.19 13.02,3.88" fill="#e8eaee"/><polygon points="17.89,5.38 19.31,3.97 18.22,1.88 16.14,0.78 14.72,2.19" fill="#d8281a"/><polygon points="2.40,17.60 7.39,15.81 19.31,3.97 18.22,1.88 16.14,0.78 4.22,12.62" fill="none" stroke="#5a4210" stroke-width="0.5"/></svg></div>
<div class="t" style="right:245px;top:539px;color:#ffffff;font-size:11px;letter-spacing:-0.2px;">Rank</div>
<div class="le" style="left:754px;top:533px;width:186px;height:22px"></div>
<div class="t" style="left:756px;top:539px;color:#ffffff;font-size:11px;letter-spacing:-0.1px;width:183px;overflow:hidden;">000000000000000000000000</div>
<div class="t" style="right:245px;top:563px;color:#ffffff;font-size:11px;letter-spacing:-0.2px;">reserved 3</div>
<div class="le" style="left:754px;top:557px;width:186px;height:22px"></div>
<div class="t" style="left:756px;top:563px;color:#ffffff;font-size:11px;letter-spacing:-0.1px;width:183px;overflow:hidden;">0</div>
</div>
<svg class="abs" style="left:0;top:0" width="996" height="624" viewBox="0 0 996 624"><defs><linearGradient id="wg" x1="0" y1="597" x2="0" y2="616" gradientUnits="userSpaceOnUse"><stop offset="0" stop-color="#1580b0"/><stop offset="1" stop-color="#3d3a8e"/></linearGradient></defs><text x="799" y="616" textLength="18.5" lengthAdjust="spacingAndGlyphs" font-family="Liberation Sans" font-weight="bold" font-size="26.5" fill="url(#wg)" stroke="url(#wg)" stroke-width="1.1">S</text><text x="818.5" y="616" textLength="20.0" lengthAdjust="spacingAndGlyphs" font-family="Liberation Sans" font-weight="bold" font-size="26.5" fill="url(#wg)" stroke="url(#wg)" stroke-width="1.1">U</text><text x="841" y="616" textLength="19" lengthAdjust="spacingAndGlyphs" font-family="Liberation Sans" font-weight="bold" font-size="26.5" fill="url(#wg)" stroke="url(#wg)" stroke-width="1.1">P</text><circle cx="872.6" cy="606.5" r="11.6" fill="#a0282a"/><path d="M874 615 L878.5 618.5 L880 613Z" fill="#a0282a"/><circle cx="866.8" cy="606.8" r="1.4" fill="#111"/><circle cx="872.5" cy="606.8" r="1.4" fill="#111"/><circle cx="878.3" cy="606.8" r="1.4" fill="#111"/><text x="886" y="616" textLength="19" lengthAdjust="spacingAndGlyphs" font-family="Liberation Sans" font-weight="bold" font-size="26.5" fill="url(#wg)" stroke="url(#wg)" stroke-width="1.1">R</text><text x="905.5" y="616" textLength="18.5" lengthAdjust="spacingAndGlyphs" font-family="Liberation Sans" font-weight="bold" font-size="26.5" fill="url(#wg)" stroke="url(#wg)" stroke-width="1.1">T</text><text x="926" y="616" textLength="16" lengthAdjust="spacingAndGlyphs" font-family="Liberation Sans" font-weight="bold" font-size="26.5" fill="url(#wg)" stroke="url(#wg)" stroke-width="1.1">E</text><g fill="#a82a2c"><rect x="950" y="598" width="9" height="3"/><rect x="957" y="601" width="3" height="2"/><rect x="947" y="600" width="4" height="3"/><rect x="945" y="603" width="5" height="10"/><rect x="947" y="612" width="4" height="2"/><rect x="949" y="613" width="13" height="3"/><rect x="952" y="606" width="10" height="3"/><rect x="957" y="609" width="5" height="5"/><rect x="966" y="598" width="5" height="18"/><rect x="979" y="598" width="5" height="18"/><rect x="970" y="600" width="3" height="4"/><rect x="972" y="603" width="3" height="3"/><rect x="974" y="605" width="2" height="4"/><rect x="976" y="603" width="3" height="3"/><rect x="977" y="600" width="3" height="4"/><rect x="967" y="590" width="4" height="2"/><rect x="964" y="592" width="3" height="2"/><rect x="971" y="592" width="3" height="2"/><rect x="961" y="594" width="3" height="2"/><rect x="974" y="594" width="3" height="2"/><rect x="959" y="596" width="2" height="2"/></g></svg>
</body></html>
